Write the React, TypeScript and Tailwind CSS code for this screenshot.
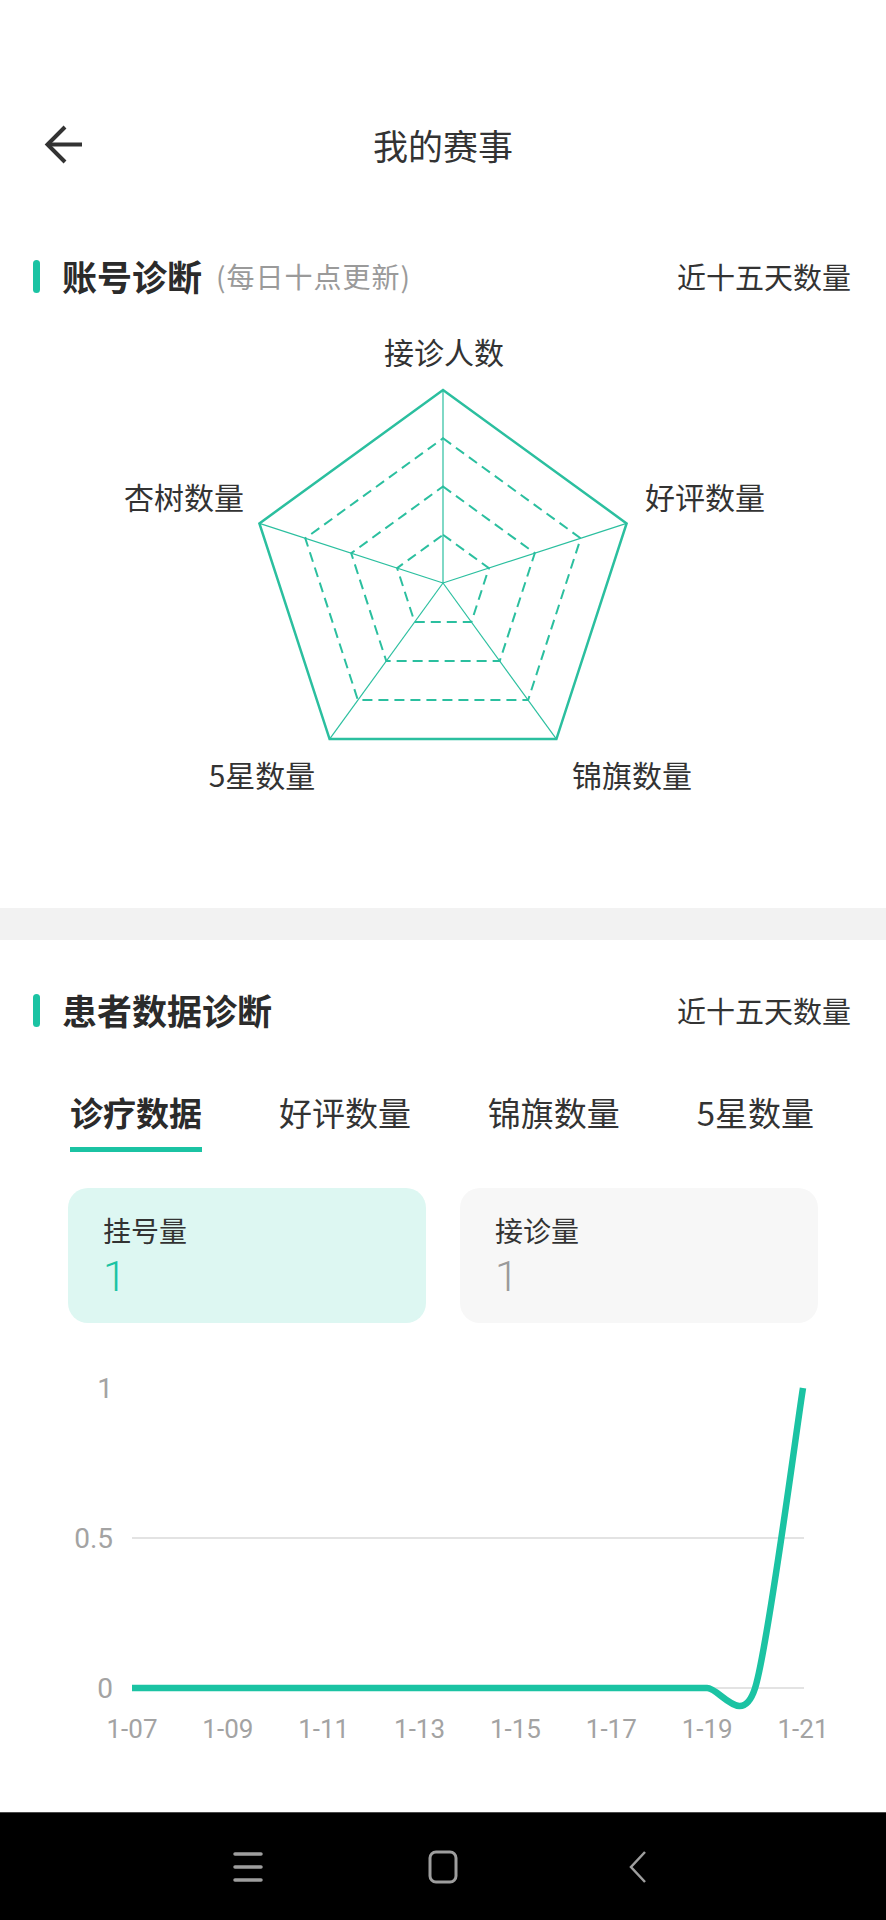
import React from 'react';

const GREEN = '#1bc3a3';
const RADAR = '#2bbf9f';

const radarLabels = [
  { text: '接诊人数', x: 444, y: 55, anchor: 'middle' },
  { text: '好评数量', x: 645, y: 200, anchor: 'start' },
  { text: '锦旗数量', x: 632, y: 478, anchor: 'middle' },
  { text: '5星数量', x: 262, y: 478, anchor: 'middle' },
  { text: '杏树数量', x: 244, y: 200, anchor: 'end' },
];

const days = ['1-07', '1-08', '1-09', '1-10', '1-11', '1-12', '1-13', '1-14', '1-15', '1-16', '1-17', '1-18', '1-19', '1-20', '1-21'];

function BackArrow() {
  return (
    <svg width="40" height="40" viewBox="0 0 40 40" fill="none" stroke="#333" strokeWidth="4">
      <path d="M3 19.5H38" />
      <path d="M21 2L3.5 19.5L21 37" />
    </svg>
  );
}

function SectionHeader({ title, sub }: { title: string; sub?: string }) {
  return (
    <div className="flex items-center justify-between pl-[33px] pr-[35px] h-[40px]">
      <div className="flex items-center">
        <div className="w-[7px] h-[33px] rounded-full bg-[#1bc3a3]" />
        <span className="ml-[22px] text-[35px] leading-[40px] font-bold text-[#2b2b2b]">{title}</span>
        {sub && <span className="ml-[14px] text-[28px] leading-[40px] tracking-[1px] text-[#9a9a9a]">{sub}</span>}
      </div>
      <span className="text-[29px] leading-[40px] text-[#333]">近十五天数量</span>
    </div>
  );
}

function Radar() {
  const cx = 443;
  const cy = 287;
  const R = 193;
  const pt = (k: number, r: number) => {
    const a = (-90 + 72 * k) * (Math.PI / 180);
    return [cx + r * Math.cos(a), cy + r * Math.sin(a)];
  };
  const ring = (r: number) => [0, 1, 2, 3, 4].map((k) => pt(k, r).map((v) => v.toFixed(1)).join(',')).join(' ');
  return (
    <svg width="886" height="612" viewBox="0 0 886 612" className="block">
      {[0.25, 0.5, 0.75].map((f) => (
        <polygon key={f} points={ring(R * f)} fill="none" stroke={RADAR} strokeWidth="2" strokeDasharray="10 6" />
      ))}
      {[0, 1, 2, 3, 4].map((k) => {
        const [x, y] = pt(k, R);
        return <line key={k} x1={cx} y1={cy} x2={x} y2={y} stroke={RADAR} strokeWidth="1.2" />;
      })}
      <polygon points={ring(R)} fill="none" stroke={RADAR} strokeWidth="2.5" strokeLinejoin="miter" />
      {radarLabels.map((l) => (
        <text
          key={l.text}
          x={l.x}
          y={l.y}
          textAnchor={l.anchor as 'start' | 'middle' | 'end'}
          dominantBaseline="central"
          fontSize="30"
          fill="#333"
          fontFamily="'Noto Sans CJK SC', 'Noto Sans', sans-serif"
        >
          {l.text}
        </text>
      ))}
    </svg>
  );
}

function LineChart() {
  const x0 = 132;
  const step = (803 - 132) / 14;
  const y0 = 365;
  const y1 = 65;
  const s = 0.135;
  const x12 = x0 + 12 * step;
  const x13 = x0 + 13 * step;
  const x14 = x0 + 14 * step;
  const d = [
    `M${x0} ${y0}`,
    `L${x12.toFixed(1)} ${y0}`,
    `C${(x12 + 2 * step * s).toFixed(1)} ${y0} ${(x13 - 2 * step * s).toFixed(1)} ${(y0 + (y0 - y1) * s).toFixed(1)} ${x13.toFixed(1)} ${y0}`,
    `C${(x13 + 2 * step * s).toFixed(1)} ${(y0 - (y0 - y1) * s).toFixed(1)} ${(x14 - step * s).toFixed(1)} ${(y1 + (y0 - y1) * s).toFixed(1)} ${x14.toFixed(1)} ${y1}`,
  ].join(' ');
  const font = "Roboto, 'Noto Sans', sans-serif";
  return (
    <svg width="886" height="489" viewBox="0 0 886 489" className="block">
      <line x1={x0} x2={804} y1={215} y2={215} stroke="#e3e3e3" strokeWidth="2" />
      <line x1={x0} x2={804} y1={y0} y2={y0} stroke="#e3e3e3" strokeWidth="2" />
      {[
        { t: '1', y: y1 },
        { t: '0.5', y: 215 },
        { t: '0', y: y0 },
      ].map((l) => (
        <text key={l.t} x={113} y={l.y} textAnchor="end" dominantBaseline="central" fontSize="28" fill="#a3a3a3" fontFamily={font}>
          {l.t}
        </text>
      ))}
      {days.map((day, i) =>
        i % 2 === 0 ? (
          <text key={day} x={x0 + i * step} y={406} textAnchor="middle" dominantBaseline="central" fontSize="26" fill="#a3a3a3" fontFamily={font}>
            {day}
          </text>
        ) : null
      )}
      <path d={d} fill="none" stroke={GREEN} strokeWidth="6.5" strokeLinejoin="round" />
    </svg>
  );
}

function StatCard({ label, value, active }: { label: string; value: string; active?: boolean }) {
  return (
    <div className={`flex-1 h-[135px] rounded-[20px] pl-[35px] pt-[24px] ${active ? 'bg-[#ddf7f2]' : 'bg-[#f7f7f7]'}`}>
      <div className="text-[28px] leading-[36px] text-[#333]">{label}</div>
      <div
        className={`mt-[4px] text-[42px] leading-[50px] font-light font-['Roboto',sans-serif] ${active ? 'text-[#1bc3a3]' : 'text-[#9a9a9a]'}`}
      >
        {value}
      </div>
    </div>
  );
}

export default function App() {
  const tabs = ['诊疗数据', '好评数量', '锦旗数量', '5星数量'];
  return (
    <div className="w-[886px] min-h-[1920px] bg-white flex flex-col font-['Noto_Sans_CJK_SC','Noto_Sans',sans-serif]">
      <div className="pt-[96px]">
        <div className="grid grid-cols-[1fr_auto_1fr] items-center h-[98px]">
          <div className="pl-[44px] flex items-center">
            <BackArrow />
          </div>
          <span className="text-[35px] leading-[44px] text-[#333]">我的赛事</span>
          <div />
        </div>
      </div>

      <div className="mt-[62px]">
        <SectionHeader title="账号诊断" sub="(每日十点更新)" />
      </div>
      <Radar />

      <div className="h-[32px] bg-[#f2f2f2]" />

      <div className="mt-[50px]">
        <SectionHeader title="患者数据诊断" />
      </div>

      <div className="mt-[62px] flex justify-between items-start pl-[70px] pr-[72px]">
        {tabs.map((t, i) => (
          <div key={t} className="flex flex-col">
            <span className={`text-[33px] leading-[40px] ${i === 0 ? 'font-bold text-[#2b2b2b]' : 'text-[#333]'}`}>{t}</span>
            {i === 0 && <div className="mt-[15px] h-[5px] bg-[#1bc3a3]" />}
          </div>
        ))}
      </div>

      <div className="mt-[36px] flex gap-[34px] px-[68px]">
        <StatCard label="挂号量" value="1" active />
        <StatCard label="接诊量" value="1" />
      </div>

      <LineChart />

      <div className="mt-auto h-[108px] bg-black border-t border-[#4a4a4a] flex items-center pl-[233px]">
        <svg width="30" height="30" viewBox="0 0 30 30" stroke="#9e9e9e" strokeWidth="3.5" strokeLinecap="round">
          <path d="M2 2H28M2 15H28M2 28H28" />
        </svg>
        <svg className="ml-[165px]" width="30" height="34" viewBox="0 0 30 34" fill="none" stroke="#9e9e9e" strokeWidth="3">
          <rect x="2" y="2" width="26" height="30" rx="6" />
        </svg>
        <svg className="ml-[171px]" width="18" height="34" viewBox="0 0 18 34" fill="none" stroke="#9e9e9e" strokeWidth="2.5">
          <path d="M16 2L2 17L16 32" />
        </svg>
      </div>
    </div>
  );
}
